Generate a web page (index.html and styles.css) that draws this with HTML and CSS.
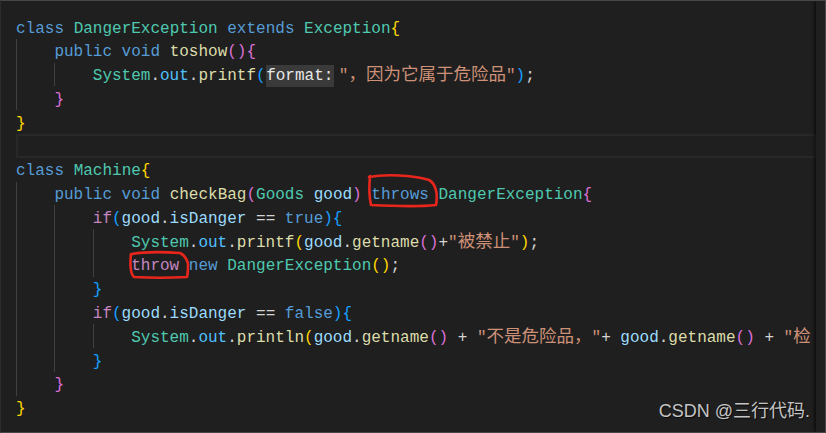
FILE: index.html
```html
<!DOCTYPE html>
<html lang="zh">
<head>
<meta charset="utf-8">
<link rel="stylesheet" href="styles.css">
</head>
<body>
<div class="frame">
  <div class="editor">
    <div class="line"><span class="code"><span class="k">class</span> <span class="t">DangerException</span> <span class="k">extends</span> <span class="t">Exception</span><span class="b1">{</span></span></div>
    <div class="line"><span class="ind"></span><span class="code"><span class="k">public</span> <span class="k">void</span> <span class="f">toshow</span><span class="b2">()</span><span class="b2">{</span></span></div>
    <div class="line"><span class="ind"></span><span class="ind"></span><span class="code"><span class="t">System</span><span class="p">.</span><span class="o">out</span><span class="p">.</span><span class="f">printf</span><span class="b3">(</span><span class="hint">format:</span><span class="s">"<span class="z">，因为它属于危险品</span>"</span><span class="b3">)</span><span class="p">;</span></span></div>
    <div class="line"><span class="ind"></span><span class="code"><span class="b2">}</span></span></div>
    <div class="line"><span class="code"><span class="b1">}</span></span></div>
    <div class="line current"><span class="code"> </span></div>
    <div class="line"><span class="code"><span class="k">class</span> <span class="t">Machine</span><span class="b1">{</span></span></div>
    <div class="line"><span class="ind"></span><span class="code"><span class="k">public</span> <span class="k">void</span> <span class="f">checkBag</span><span class="b2">(</span><span class="t">Goods</span> <span class="v">good</span><span class="b2">)</span> <span class="k">throws</span> <span class="t">DangerException</span><span class="b2">{</span></span></div>
    <div class="line"><span class="ind"></span><span class="ind"></span><span class="code"><span class="c">if</span><span class="b3">(</span><span class="v">good</span><span class="p">.</span><span class="v">isDanger</span> <span class="p">==</span> <span class="k">true</span><span class="b3">)</span><span class="b3">{</span></span></div>
    <div class="line"><span class="ind"></span><span class="ind"></span><span class="ind"></span><span class="code"><span class="t">System</span><span class="p">.</span><span class="o">out</span><span class="p">.</span><span class="f">printf</span><span class="b1">(</span><span class="v">good</span><span class="p">.</span><span class="f">getname</span><span class="b2">()</span><span class="p">+</span><span class="s">"<span class="z">被禁止</span>"</span><span class="b1">)</span><span class="p">;</span></span></div>
    <div class="line"><span class="ind"></span><span class="ind"></span><span class="ind"></span><span class="code"><span class="c">throw</span> <span class="k">new</span> <span class="t">DangerException</span><span class="b1">()</span><span class="p">;</span></span></div>
    <div class="line"><span class="ind"></span><span class="ind"></span><span class="code"><span class="b3">}</span></span></div>
    <div class="line"><span class="ind"></span><span class="ind"></span><span class="code"><span class="c">if</span><span class="b3">(</span><span class="v">good</span><span class="p">.</span><span class="v">isDanger</span> <span class="p">==</span> <span class="k">false</span><span class="b3">)</span><span class="b3">{</span></span></div>
    <div class="line"><span class="ind"></span><span class="ind"></span><span class="ind"></span><span class="code"><span class="t">System</span><span class="p">.</span><span class="o">out</span><span class="p">.</span><span class="f">println</span><span class="b1">(</span><span class="v">good</span><span class="p">.</span><span class="f">getname</span><span class="b2">()</span> <span class="p">+</span> <span class="s">"<span class="z">不是危险品，</span>"</span><span class="p">+</span> <span class="v">good</span><span class="p">.</span><span class="f">getname</span><span class="b2">()</span> <span class="p">+</span> <span class="s">"<span class="z">检</span></span></span></div>
    <div class="line"><span class="ind"></span><span class="ind"></span><span class="code"><span class="b3">}</span></span></div>
    <div class="line"><span class="ind"></span><span class="code"><span class="b2">}</span></span></div>
    <div class="line"><span class="code"><span class="b1">}</span></span></div>
  </div>
  <div class="scroll"></div>
  <svg class="marks" width="826" height="433" viewBox="0 0 826 433">
    <path d="M369 177 C385 174 412 175 429 180 C436 184 438 194 436 205 C418 207 390 206 371 205 C369 196 369 186 370 176" />
    <path d="M132 254 C148 251 166 252 180 253 C184 255 187 259 188 264 C188 269 188 273 187 277 C170 278 150 278 134 277 C130 274 130 262 131 254" />
  </svg>
  <div class="watermark">CSDN @三行代码.</div>
</div>
</body>
</html>
```

FILE: styles.css
```css
html, body {
  margin: 0;
  padding: 0;
  background: #1f1f1f;
}

.frame {
  position: relative;
  width: 826px;
  height: 433px;
  box-sizing: border-box;
  border-top: 1px solid #474747;
  border-right: 1px solid #4a4a4a;
  border-bottom: 1px solid #474747;
  border-left: 1px solid #2c2c2c;
  display: flex;
  overflow: hidden;
  background: #1f1f1f;
}

.editor {
  flex: 1;
  min-width: 0;
  overflow: hidden;
  padding: 14px 0 0 15px;
  font-family: "Liberation Mono", "Noto Sans CJK SC", monospace;
  font-size: 16px;
  color: #d4d4d4;
}

.line {
  display: flex;
  height: 23.8px;
  line-height: 23.8px;
  box-sizing: border-box;
}

.line.current {
  box-shadow: inset 0 0 0 2px #282828;
}

.ind {
  flex: 0 0 38.4px;
  box-sizing: border-box;
  border-left: 1px solid #404040;
}

.code {
  white-space: pre;
  flex-shrink: 0;
  padding-top: 2.5px;
}

.z {
  font-family: "Noto Sans CJK SC", sans-serif;
  font-size: 17.5px;
  line-height: 16px;
}

.k { color: #569cd6; }
.c { color: #c586c0; }
.t { color: #4ec9b0; }
.f { color: #dcdcaa; }
.v { color: #9cdcfe; }
.o { color: #4fc1ff; }
.s { color: #ce9178; }
.p { color: #d4d4d4; }
.b1 { color: #ffd700; }
.b2 { color: #da70d6; }
.b3 { color: #179fff; }

.hint {
  display: inline-block;
  height: 22px;
  line-height: 22px;
  padding: 0 0.5px;
  margin-right: 5px;
  background: #3a3a3a;
  color: #e8e8e8;
  vertical-align: top;
}

.scroll {
  flex: 0 0 9px;
  background: #1f1f1f;
  box-shadow: -2px 0 3px rgba(0, 0, 0, 0.55);
  position: relative;
  z-index: 1;
}

.marks {
  position: absolute;
  left: -1px;
  top: -1px;
  pointer-events: none;
  z-index: 2;
}

.marks path {
  fill: none;
  stroke: #e8261c;
  stroke-width: 2.6;
  stroke-linecap: round;
  stroke-linejoin: round;
}

.watermark {
  position: absolute;
  right: 15px;
  top: 399px;
  z-index: 3;
  font-family: "Liberation Sans", "Noto Sans CJK SC", sans-serif;
  font-size: 18px;
  line-height: 22px;
  color: #c4c4c4;
  text-shadow: 1px 1px 1px rgba(0, 0, 0, 0.7);
  white-space: nowrap;
}
```
